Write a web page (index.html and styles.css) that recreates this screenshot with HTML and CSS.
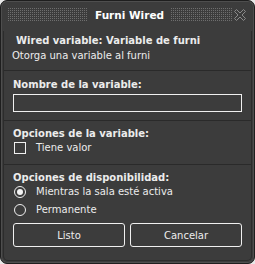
FILE: index.html
```html
<!DOCTYPE html>
<html>
<head>
<meta charset="utf-8">
<link rel="stylesheet" href="styles.css">
</head>
<body>
<div class="window">
  <div class="header">
    <div class="dots dots-left"></div>
    <div class="title">Furni Wired</div>
    <div class="dots dots-right"></div>
    <svg class="close" width="14" height="14" viewBox="0 0 14 14">
      <path d="M1.5 3.5 L3.5 1.5 L7 5 L10.5 1.5 L12.5 3.5 L9 7 L12.5 10.5 L10.5 12.5 L7 9 L3.5 12.5 L1.5 10.5 L5 7 Z" fill="none" stroke="#8a8a8a" stroke-width="1"/>
    </svg>
  </div>
  <div class="content">
    <div class="section intro">
      <div class="heading wired">Wired variable: Variable de furni</div>
      <div class="text">Otorga una variable al furni</div>
    </div>
    <div class="section s2">
      <div class="heading">Nombre de la variable:</div>
      <div class="input"></div>
    </div>
    <div class="section s3">
      <div class="heading">Opciones de la variable:</div>
      <div class="option"><span class="checkbox"></span><span class="text">Tiene valor</span></div>
    </div>
    <div class="section s4">
      <div class="heading">Opciones de disponibilidad:</div>
      <div class="option"><span class="radio checked"></span><span class="text">Mientras la sala esté activa</span></div>
      <div class="option second"><span class="radio"></span><span class="text">Permanente</span></div>
      <div class="buttons">
        <div class="btn">Listo</div>
        <div class="btn">Cancelar</div>
      </div>
    </div>
  </div>
</div>
</body>
</html>
```
FILE: styles.css
```css
html, body {
  margin: 0;
  padding: 0;
  background: #e8e8e8;
}
body {
  font-family: "DejaVu Sans", "Liberation Sans", sans-serif;
  color: #ececec;
}
.window {
  width: 255px;
  height: 264px;
  box-sizing: border-box;
  background: #3c3c3c;
  border: 1px solid #1e1e1e;
  border-radius: 7px;
  box-shadow: inset 0 0 0 1px #4e4e4e;
  display: flex;
  flex-direction: column;
  overflow: hidden;
}
.header {
  height: 30px;
  position: relative;
  display: flex;
  align-items: center;
  padding: 0 0 0 7px;
  box-sizing: border-box;
}
.dots {
  height: 14px;
  background-image: conic-gradient(at 1px 1px, transparent 75%, #6e6e6e 0);
  background-size: 2px 2px;
  margin-top: -2px;
}
.dots-left { width: 80px; }
.dots-right { width: 62px; }
.title {
  width: 83px;
  text-align: center;
  font-weight: bold;
  font-size: 10.5px;
  color: #fff;
  margin-top: -2px;
  white-space: nowrap;
}
.close {
  margin-left: 0;
  margin-top: -2px;
}
.content {
  flex: 1;
  margin: 0 2px 2px 2px;
  border-left: 1px solid #2c2c2c;
  border-right: 1px solid #2c2c2c;
  border-bottom: 1px solid #2c2c2c;
  border-radius: 0 0 5px 5px;
  display: flex;
  flex-direction: column;
}
.section {
  border-bottom: 1px solid #2a2a2a;
  padding: 0 9px;
}
.section:last-child { border-bottom: none; }
.heading {
  font-weight: bold;
  font-size: 10px;
  line-height: 14px;
  height: 14px;
  white-space: nowrap;
}
.text {
  font-size: 10px;
  line-height: 15px;
  white-space: nowrap;
}
.intro {
  height: 37px;
  padding-top: 2px;
  padding-left: 8px;
}
.intro .wired {
  padding-left: 4px;
  line-height: 15px;
  height: 15px;
}
.s2 {
  height: 42px;
  padding-top: 7px;
}
.input {
  margin-top: 2px;
  height: 16px;
  border: 1px solid #f0f0f0;
  margin-right: 0;
}
.s3 {
  height: 37px;
  padding-top: 6px;
}
.option {
  display: flex;
  align-items: center;
  height: 12px;
  margin-top: 1px;
}
.option.second { margin-top: 6px; }
.option .text { margin-left: 10px; line-height: 12px; }
.checkbox {
  width: 10px;
  height: 10px;
  border: 1px solid #f0f0f0;
  margin-left: 1px;
}
.radio {
  width: 10px;
  height: 10px;
  border: 1px solid #f0f0f0;
  border-radius: 50%;
  position: relative;
  margin-left: 1px;
}
.radio.checked::after {
  content: "";
  position: absolute;
  left: 2px;
  top: 2px;
  width: 6px;
  height: 6px;
  border-radius: 50%;
  background: #f4f4f4;
}
.s4 {
  flex: 1;
  padding-top: 6px;
}
.buttons {
  display: flex;
  gap: 5px;
  margin-top: 7px;
}
.btn {
  flex: 1;
  height: 22px;
  border: 1px solid #f0f0f0;
  border-radius: 3px;
  display: flex;
  align-items: center;
  justify-content: center;
  font-size: 10px;
}
```
